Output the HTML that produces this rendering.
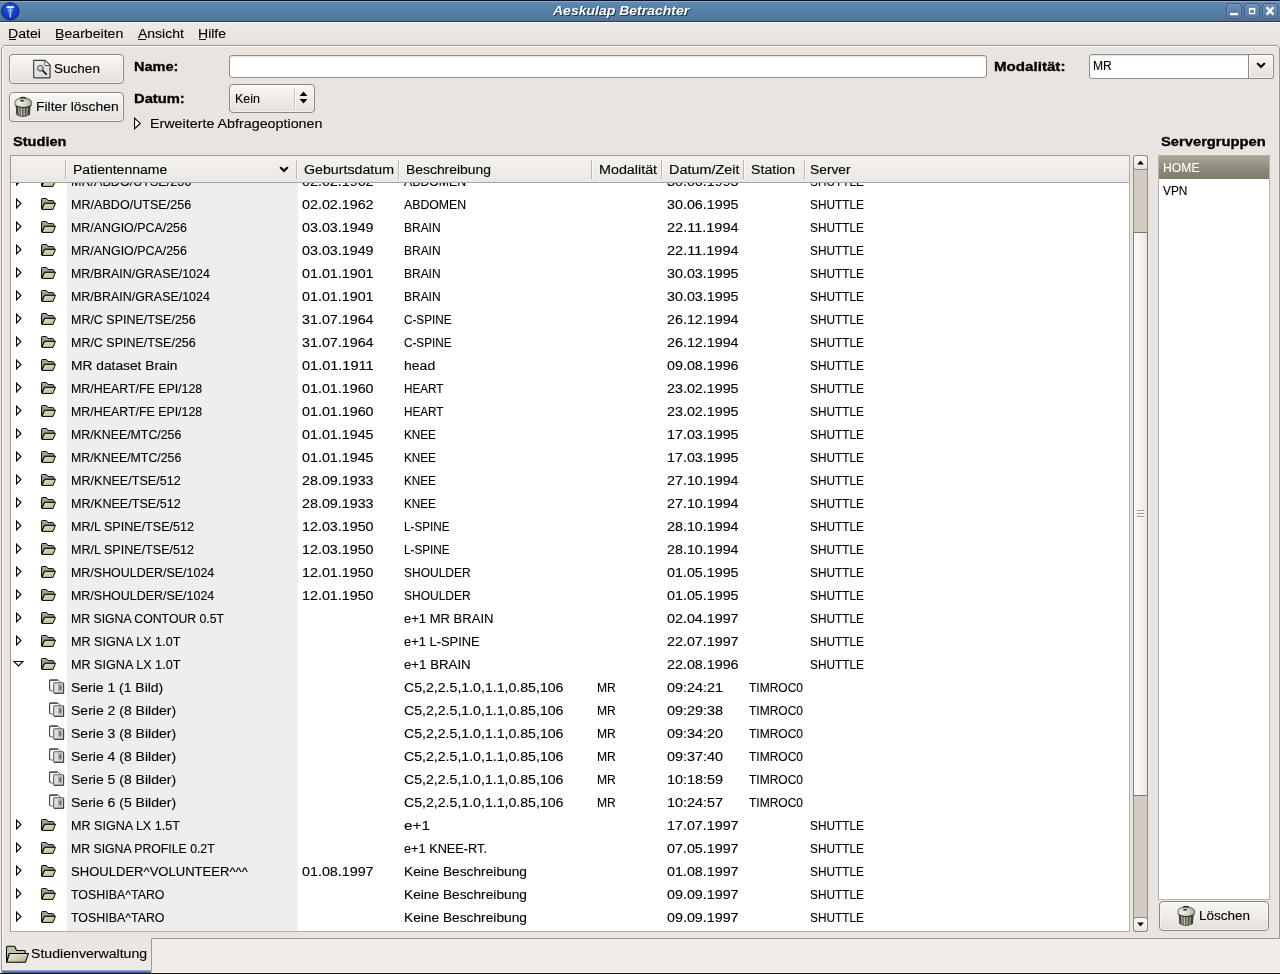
<!DOCTYPE html>
<html>
<head>
<meta charset="utf-8">
<title>Aeskulap Betrachter</title>
<style>
html,body{margin:0;padding:0;background:#efece8;}
body{width:1280px;height:974px;overflow:hidden;font-family:"Liberation Sans",sans-serif;font-size:12.5px;color:#000;}
#win{position:relative;width:1280px;height:974px;overflow:hidden;background:#efece8;}
#win *{position:absolute;box-sizing:border-box;}
.t{-webkit-text-stroke:.12px currentColor;transform-origin:0 0;white-space:pre;line-height:20px;font-size:12.5px;font-family:"Liberation Sans",sans-serif;color:#000;}
.t u{position:static !important;text-decoration:underline;text-underline-offset:1.5px;text-decoration-thickness:1px;}
#txt,#rows{will-change:transform;}
#txt{left:0;top:0;width:1280px;height:974px;}
.b{font-weight:bold;-webkit-text-stroke:.3px #000;}
.bi{font-weight:bold;font-style:italic;-webkit-text-stroke:0;}
.title{text-shadow:1px 1px 0 #1d3350;}
#titlebar{left:0;top:0;width:1280px;height:22px;background:linear-gradient(#061226 0,#061226 1px,#88a7c9 1px,#88a7c9 2px,#668bb0 2px,#5a85ae 5px,#567ea6 10px,#527ca5 17px,#56779a 19px,#5a7089 20px,#5a7089 20.5px,#2d3f54 21px,#2d3f54 22px);}
.wb{top:3px;width:16px;height:16px;border:1px solid #3e5f86;border-radius:4px;background:linear-gradient(#6b8fb6,#52779d);box-shadow:inset 0 0 0 1px rgba(255,255,255,.10);}
#menubar{left:0;top:22px;width:1280px;height:23px;background:linear-gradient(#f8f7f5 0,#f8f7f5 1px,#edeae5 1px,#e7e3de 22px,#dcd8d2 22px,#dcd8d2 23px);}
#page{left:1px;top:45px;width:1279px;height:894px;background:#e9e4df;border:1px solid #9d9890;border-radius:4px 4px 0 0;box-shadow:inset 1px 1px 0 #fbfaf9;}
#tab{left:1px;top:938px;width:151px;height:34px;background:linear-gradient(#e9e4df,#eeebe7);border:1px solid #9d9890;border-top:none;border-bottom:none;border-radius:0 0 4px 4px;box-shadow:inset 1px 0 0 #f4f2ef;}
#tabblue{left:1px;top:970px;width:151px;height:3px;background:linear-gradient(#86a9cf 0,#86a9cf 1px,#5c87b3 1px,#5c87b3 2px,#3f6389 2px);border-radius:0 0 4px 4px;}
#botline{left:0;top:973px;width:1280px;height:1px;background:#111;}
#botwhite{left:153px;top:972px;width:1127px;height:1px;background:#fbfaf9;}
.btn{border:1px solid #8d8880;border-radius:4px;background:linear-gradient(#f8f7f5,#efece9 45%,#e4e0db);box-shadow:inset 0 0 0 1px rgba(255,255,255,.55);}
.entry{border:1px solid #938e87;border-radius:3px;background:#fff;box-shadow:inset 0 1px 1px rgba(0,0,0,.12);}
#tree{left:10px;top:155px;width:1120px;height:777px;background:#fff;border:1px solid;border-color:#a39e97 #b4afa8 #b4afa8 #9c978f;}
#sortcol{left:67px;top:183px;width:231px;height:748px;background:#eeeeee;}
#rows{left:0;top:0;width:1280px;height:974px;clip-path:inset(183px 151px 43px 11px);}
#thead{left:11px;top:156px;width:1118px;height:27px;background:linear-gradient(#f4f2f0,#efece9 50%,#ebe7e3);border-bottom:1px solid #a9a49d;}
.sep{top:160px;width:2px;height:19px;background:linear-gradient(90deg,#bcb7b0 0,#bcb7b0 1px,#fbfaf9 1px);}
.ic{overflow:visible;}
#sb{left:1133px;top:155px;width:15px;height:777px;background:#d3cac1;border:1px solid #968f87;border-radius:3px;}
.step{left:1133px;width:15px;height:15px;border:1px solid #8d8880;border-radius:3px;background:linear-gradient(#fbfaf9,#e9e5e1);}
#thumb{left:1133px;top:232px;width:15px;height:564px;border:1px solid #7f7a74;background:linear-gradient(90deg,#fdfcfc,#f4f2f0 50%,#e9e5e1);}
#slist{left:1158px;top:155px;width:112px;height:745px;background:#fff;border:1px solid #b6b1a9;}
#selrow{left:1159px;top:156px;width:110px;height:23px;background:linear-gradient(#aba594,#8f8b7b 55%,#7d796b);}
</style>
</head>
<body>
<svg width="0" height="0" style="position:absolute">
<defs>
<linearGradient id="gFold" x1="0" y1="0" x2="1" y2="1"><stop offset="0" stop-color="#dfe2c2"/><stop offset="1" stop-color="#b9bc98"/></linearGradient>
<linearGradient id="gFold2" x1="0" y1="0" x2="1" y2="1"><stop offset="0" stop-color="#e4e6cd"/><stop offset=".5" stop-color="#cfd2b1"/><stop offset="1" stop-color="#a6a889"/></linearGradient>
<linearGradient id="gPage" x1="0" y1="0" x2="1" y2="1"><stop offset="0" stop-color="#eeeeee"/><stop offset="1" stop-color="#d6d6d6"/></linearGradient>
<linearGradient id="gBin" x1="0" y1="0" x2="1" y2="0"><stop offset="0" stop-color="#3b3a31"/><stop offset=".3" stop-color="#8d8c7d"/><stop offset=".55" stop-color="#75746a"/><stop offset="1" stop-color="#36352d"/></linearGradient>
<radialGradient id="gLid" cx=".3" cy=".55" r=".75"><stop offset="0" stop-color="#f0f0e5"/><stop offset=".55" stop-color="#d2d2c3"/><stop offset="1" stop-color="#9a9a8b"/></radialGradient>
<radialGradient id="gApp" cx=".45" cy=".35" r=".7"><stop offset="0" stop-color="#2a5ae0"/><stop offset=".7" stop-color="#1038c0"/><stop offset="1" stop-color="#0a2690"/></radialGradient>
<symbol id="exc" viewBox="0 0 7 13" overflow="visible"><path d="M0.55 1.1 L4.95 5.5 L0.55 9.9 Z" fill="#fff" stroke="#000" stroke-width="1.1" stroke-linejoin="miter"/></symbol>
<symbol id="exo" viewBox="0 0 12 7" overflow="visible"><path d="M1.08 1.55 L9.92 1.55 L5.5 5.97 Z" fill="#fff" stroke="#000" stroke-width="1.1" stroke-linejoin="miter"/></symbol>
<symbol id="fold" viewBox="0 0 16 14" overflow="visible">
 <path d="M0.6 12 V2.3 Q0.6 1.5 1.4 1.5 H5.3 L7.2 3.6 H11.8 Q12.6 3.6 12.8 4.4 L13.3 6.3 H3.4 Z" fill="#a3a58f" stroke="#000" stroke-width="1" stroke-linejoin="round"/>
 <path d="M3.7 6.3 H14.5 L12 12.4 H0.9 Z" fill="url(#gFold)" stroke="#000" stroke-width="1" stroke-linejoin="round"/>
</symbol>
<symbol id="ser" viewBox="0 0 16 16" overflow="visible">
 <path d="M0.6 1.2 Q0.6 0.6 1.2 0.6 H8.8 L11.4 3.2 V12 H1.6 L0.6 11 Z" fill="#fcfcfc" stroke="#6a6a6a" stroke-width="1"/>
 <path d="M1 1.5 H8.6" fill="none" stroke="#555" stroke-width="1"/>
 <path d="M0.6 1.2 V11 L1.6 12" fill="none" stroke="#444" stroke-width="1"/>
 <rect x="4.6" y="3.7" width="10" height="10.6" rx="0.6" fill="#cecece" stroke="#666" stroke-width="1"/>
 <path d="M14.6 4 V14.3 H4.9" fill="none" stroke="#3a3a3a" stroke-width="1"/>
 <rect x="5.8" y="4.9" width="3.4" height="8.2" fill="#dddddd"/>
 <rect x="9.2" y="5.2" width="3.8" height="6.6" fill="#a6a6a6"/>
 <rect x="10.3" y="7" width="1.8" height="3.6" fill="#6c6c6c"/>
</symbol>
<symbol id="bin" viewBox="0 0 18 20" overflow="visible">
 <path d="M2.2 8 L2.8 17.6 Q9 21.2 15.5 17.6 L16.1 8 Z" fill="url(#gBin)" stroke="#2f2e27" stroke-width=".9"/>
 <path d="M4.6 10 L5.2 18.4 M7.3 10.6 L7.6 19.2 M10.2 10.6 L10.1 19.2 M13.4 10 L12.8 18.4" stroke="#c9c9b9" stroke-width="1.1" fill="none" opacity=".8"/>
 <path d="M3.4 10 L4 17.8 M6 10.4 L6.4 18.9 M8.8 10.8 L8.9 19.3 M11.8 10.4 L11.5 18.9 M14.8 10 L14.2 17.8" stroke="#3a392f" stroke-width=".7" fill="none" opacity=".7"/>
 <path d="M0.9 5.6 Q0.9 2.4 5.4 1.5 Q9 .6 12.7 1.5 Q17.7 2.4 17.7 5.6 L17.3 8.4 Q9 12.6 1.3 8.4 Z" fill="url(#gLid)" stroke="#4f4e44" stroke-width=".8"/>
 <path d="M1.4 8.6 Q9 12.9 17.2 8.6" stroke="#2f2e27" stroke-width="1" fill="none" opacity=".8"/>
 <path d="M5.8 1.3 Q9 -.5 12.2 1.3" stroke="#2a2a24" stroke-width="1.1" fill="none"/>
 <ellipse cx="8.1" cy="3.7" rx="2" ry="1" fill="#3f3e34"/>
</symbol>
<symbol id="find" viewBox="0 0 18 19" overflow="visible">
 <path d="M0.7 0.9 Q0.7 0.3 1.3 0.3 H11.8 L17.1 5 V17.2 Q17.1 17.8 16.5 17.8 H1.3 Q0.7 17.8 0.7 17.2 Z" fill="url(#gPage)" stroke="#3c3c3c" stroke-width="1.15"/>
 <path d="M12 0.8 V5.4 H16.8" fill="none" stroke="#3c3c3c" stroke-width="1"/>
 <path d="M12.4 1.6 V5 H16" fill="#f6f6f6" stroke="none"/>
 <circle cx="7.4" cy="8.3" r="2.9" fill="#c6c6be" stroke="#4a4a4a" stroke-width="1"/>
 <circle cx="6.9" cy="7.7" r="1.3" fill="#dcdcd6"/>
 <path d="M9.6 10.5 L13.2 14.1" stroke="#111" stroke-width="1.6" stroke-linecap="round"/>
</symbol>
<symbol id="tabfold" viewBox="0 0 24 18" overflow="visible">
 <path d="M0.5 16.6 V2.8 Q0.5 1.3 1.9 1.3 H7.9 Q8.8 1.3 9.2 2.2 L10.6 5.5 H18.3 Q19.2 5.5 19.2 6.4 V8.4 H3.4 Z" fill="#bfc1aa" stroke="#000" stroke-width="1.05" stroke-linejoin="round"/>
 <path d="M3.4 8.4 H22.5 L19.4 17.3 H0.7 Z" fill="url(#gFold2)" stroke="#000" stroke-width="1.05" stroke-linejoin="round"/>
</symbol>
</defs>
</svg>
<div id="win">
<div id="titlebar"></div>
<svg class="ic" style="left:1px;top:2px" width="19" height="19" viewBox="0 0 19 19"><circle cx="9.3" cy="9.3" r="8.8" fill="url(#gApp)" stroke="#0b2a8c" stroke-width=".8"/><path d="M6.2 6.6 Q7.6 7.4 9.3 7.2 Q11 7.4 12.4 6.6 L10.4 11.6 Q9.9 14.4 9.6 15.8 H9 Q8.7 14.4 8.2 11.6 Z" fill="#a9bdf0" opacity=".75"/><path d="M4.9 5.2 Q7.2 3.4 9.3 4.5 Q11.4 3.4 13.7 5.2 Q11.6 6.5 9.3 6.2 Q7 6.5 4.9 5.2 Z" fill="#fff"/><path d="M9.3 6 V15.4" stroke="#dfe7fb" stroke-width=".9"/><path d="M7.6 8.4 Q9.3 9.4 11 8.4 M8 10.6 Q9.3 11.5 10.6 10.6" stroke="#2448c4" stroke-width=".7" fill="none" opacity=".8"/></svg>
<div class="wb" style="left:1226px"></div><div class="wb" style="left:1244px"></div><div class="wb" style="left:1262px"></div>
<svg class="ic" style="left:1226px;top:3px" width="52" height="16" viewBox="0 0 52 16">
 <rect x="4" y="10" width="8" height="2.2" fill="#fff"/>
 <rect x="23.6" y="5.6" width="5" height="5" fill="none" stroke="#fff" stroke-width="1.3"/><rect x="23" y="5" width="6.2" height="1.9" fill="#fff"/>
 <path d="M40.6 4.2 L47.4 11.6 M47.4 4.2 L40.6 11.6" stroke="#fff" stroke-width="2.3" stroke-linecap="butt"/>
</svg>
<div id="menubar"></div>
<div id="page"></div>
<div id="tab"></div><div id="tabblue"></div><div id="botline"></div><div id="botwhite"></div>
<div class="btn" style="left:9px;top:54px;width:115px;height:30px"></div>
<svg class="ic" style="left:33px;top:60px" width="18" height="19"><use href="#find"/></svg>
<div class="btn" style="left:9px;top:92px;width:115px;height:30px"></div>
<svg class="ic" style="left:14px;top:97px" width="18" height="20"><use href="#bin"/></svg>
<div class="entry" style="left:229px;top:55px;width:758px;height:23px"></div>
<div class="btn" style="left:229px;top:84px;width:86px;height:29px"></div>
<div style="left:294px;top:89px;width:2px;height:19px;background:linear-gradient(90deg,#c9c4bd 0,#c9c4bd 1px,#fbfaf9 1px)"></div>
<svg class="ic" style="left:299px;top:91px" width="9" height="13" viewBox="0 0 9 13"><path d="M4.5 0.6 L8.4 5 H0.6 Z M4.5 12.4 L8.4 8 H0.6 Z" fill="#000"/></svg>
<svg class="ic" style="left:134px;top:117px" width="8" height="14" viewBox="0 0 8 14"><path d="M0.55 1.2 L6.3 6.45 L0.55 11.7 Z" fill="#fff" stroke="#000" stroke-width="1.1"/></svg>
<div class="entry" style="left:1089px;top:54px;width:185px;height:25px;border-radius:3px"></div>
<div class="btn" style="left:1248px;top:54px;width:26px;height:25px;border-radius:0 3px 3px 0"></div>
<svg class="ic" style="left:1256px;top:62px" width="10" height="8" viewBox="0 0 10 8"><path d="M0.4 1.8 L1.9 0.4 L5 3.2 L8.1 0.4 L9.6 1.8 L5 6.4 Z" fill="#000"/></svg>
<div id="tree"></div>
<div id="sortcol"></div>

<div id="rows">
<svg class="ic" style="left:16px;top:175px" width="7" height="13"><use href="#exc"/></svg>
<svg class="ic" style="left:41px;top:174px" width="16" height="14"><use href="#fold"/></svg>
<svg class="ic" style="left:16px;top:198px" width="7" height="13"><use href="#exc"/></svg>
<svg class="ic" style="left:41px;top:197px" width="16" height="14"><use href="#fold"/></svg>
<svg class="ic" style="left:16px;top:221px" width="7" height="13"><use href="#exc"/></svg>
<svg class="ic" style="left:41px;top:220px" width="16" height="14"><use href="#fold"/></svg>
<svg class="ic" style="left:16px;top:244px" width="7" height="13"><use href="#exc"/></svg>
<svg class="ic" style="left:41px;top:243px" width="16" height="14"><use href="#fold"/></svg>
<svg class="ic" style="left:16px;top:267px" width="7" height="13"><use href="#exc"/></svg>
<svg class="ic" style="left:41px;top:266px" width="16" height="14"><use href="#fold"/></svg>
<svg class="ic" style="left:16px;top:290px" width="7" height="13"><use href="#exc"/></svg>
<svg class="ic" style="left:41px;top:289px" width="16" height="14"><use href="#fold"/></svg>
<svg class="ic" style="left:16px;top:313px" width="7" height="13"><use href="#exc"/></svg>
<svg class="ic" style="left:41px;top:312px" width="16" height="14"><use href="#fold"/></svg>
<svg class="ic" style="left:16px;top:336px" width="7" height="13"><use href="#exc"/></svg>
<svg class="ic" style="left:41px;top:335px" width="16" height="14"><use href="#fold"/></svg>
<svg class="ic" style="left:16px;top:359px" width="7" height="13"><use href="#exc"/></svg>
<svg class="ic" style="left:41px;top:358px" width="16" height="14"><use href="#fold"/></svg>
<svg class="ic" style="left:16px;top:382px" width="7" height="13"><use href="#exc"/></svg>
<svg class="ic" style="left:41px;top:381px" width="16" height="14"><use href="#fold"/></svg>
<svg class="ic" style="left:16px;top:405px" width="7" height="13"><use href="#exc"/></svg>
<svg class="ic" style="left:41px;top:404px" width="16" height="14"><use href="#fold"/></svg>
<svg class="ic" style="left:16px;top:428px" width="7" height="13"><use href="#exc"/></svg>
<svg class="ic" style="left:41px;top:427px" width="16" height="14"><use href="#fold"/></svg>
<svg class="ic" style="left:16px;top:451px" width="7" height="13"><use href="#exc"/></svg>
<svg class="ic" style="left:41px;top:450px" width="16" height="14"><use href="#fold"/></svg>
<svg class="ic" style="left:16px;top:474px" width="7" height="13"><use href="#exc"/></svg>
<svg class="ic" style="left:41px;top:473px" width="16" height="14"><use href="#fold"/></svg>
<svg class="ic" style="left:16px;top:497px" width="7" height="13"><use href="#exc"/></svg>
<svg class="ic" style="left:41px;top:496px" width="16" height="14"><use href="#fold"/></svg>
<svg class="ic" style="left:16px;top:520px" width="7" height="13"><use href="#exc"/></svg>
<svg class="ic" style="left:41px;top:519px" width="16" height="14"><use href="#fold"/></svg>
<svg class="ic" style="left:16px;top:543px" width="7" height="13"><use href="#exc"/></svg>
<svg class="ic" style="left:41px;top:542px" width="16" height="14"><use href="#fold"/></svg>
<svg class="ic" style="left:16px;top:566px" width="7" height="13"><use href="#exc"/></svg>
<svg class="ic" style="left:41px;top:565px" width="16" height="14"><use href="#fold"/></svg>
<svg class="ic" style="left:16px;top:589px" width="7" height="13"><use href="#exc"/></svg>
<svg class="ic" style="left:41px;top:588px" width="16" height="14"><use href="#fold"/></svg>
<svg class="ic" style="left:16px;top:612px" width="7" height="13"><use href="#exc"/></svg>
<svg class="ic" style="left:41px;top:611px" width="16" height="14"><use href="#fold"/></svg>
<svg class="ic" style="left:16px;top:635px" width="7" height="13"><use href="#exc"/></svg>
<svg class="ic" style="left:41px;top:634px" width="16" height="14"><use href="#fold"/></svg>
<svg class="ic" style="left:13px;top:660px" width="12" height="7"><use href="#exo"/></svg>
<svg class="ic" style="left:41px;top:657px" width="16" height="14"><use href="#fold"/></svg>
<svg class="ic" style="left:49px;top:679px" width="16" height="16"><use href="#ser"/></svg>
<svg class="ic" style="left:49px;top:702px" width="16" height="16"><use href="#ser"/></svg>
<svg class="ic" style="left:49px;top:725px" width="16" height="16"><use href="#ser"/></svg>
<svg class="ic" style="left:49px;top:748px" width="16" height="16"><use href="#ser"/></svg>
<svg class="ic" style="left:49px;top:771px" width="16" height="16"><use href="#ser"/></svg>
<svg class="ic" style="left:49px;top:794px" width="16" height="16"><use href="#ser"/></svg>
<svg class="ic" style="left:16px;top:819px" width="7" height="13"><use href="#exc"/></svg>
<svg class="ic" style="left:41px;top:818px" width="16" height="14"><use href="#fold"/></svg>
<svg class="ic" style="left:16px;top:842px" width="7" height="13"><use href="#exc"/></svg>
<svg class="ic" style="left:41px;top:841px" width="16" height="14"><use href="#fold"/></svg>
<svg class="ic" style="left:16px;top:865px" width="7" height="13"><use href="#exc"/></svg>
<svg class="ic" style="left:41px;top:864px" width="16" height="14"><use href="#fold"/></svg>
<svg class="ic" style="left:16px;top:888px" width="7" height="13"><use href="#exc"/></svg>
<svg class="ic" style="left:41px;top:887px" width="16" height="14"><use href="#fold"/></svg>
<svg class="ic" style="left:16px;top:911px" width="7" height="13"><use href="#exc"/></svg>
<svg class="ic" style="left:41px;top:910px" width="16" height="14"><use href="#fold"/></svg>
<span class="t row" style="left:70.5px;top:171.67px;transform:scaleX(1.0058);">MR/ABDO/UTSE/256</span>
<span class="t row" style="left:301.5px;top:171.67px;transform:scaleX(1.1441);">02.02.1962</span>
<span class="t row" style="left:403.5px;top:171.67px;transform:scaleX(0.9837);">ABDOMEN</span>
<span class="t row" style="left:666.5px;top:171.67px;transform:scaleX(1.1441);">30.06.1995</span>
<span class="t row" style="left:809.5px;top:171.67px;transform:scaleX(0.9474);">SHUTTLE</span>
<span class="t row" style="left:70.5px;top:194.67px;transform:scaleX(1.0058);">MR/ABDO/UTSE/256</span>
<span class="t row" style="left:301.5px;top:194.67px;transform:scaleX(1.1441);">02.02.1962</span>
<span class="t row" style="left:403.5px;top:194.67px;transform:scaleX(0.9837);">ABDOMEN</span>
<span class="t row" style="left:666.5px;top:194.67px;transform:scaleX(1.1441);">30.06.1995</span>
<span class="t row" style="left:809.5px;top:194.67px;transform:scaleX(0.9474);">SHUTTLE</span>
<span class="t row" style="left:70.5px;top:217.67px;transform:scaleX(0.9932);">MR/ANGIO/PCA/256</span>
<span class="t row" style="left:301.5px;top:217.67px;transform:scaleX(1.1441);">03.03.1949</span>
<span class="t row" style="left:403.5px;top:217.67px;transform:scaleX(0.9579);">BRAIN</span>
<span class="t row" style="left:666.5px;top:217.67px;transform:scaleX(1.1612);">22.11.1994</span>
<span class="t row" style="left:809.5px;top:217.67px;transform:scaleX(0.9474);">SHUTTLE</span>
<span class="t row" style="left:70.5px;top:240.67px;transform:scaleX(0.9932);">MR/ANGIO/PCA/256</span>
<span class="t row" style="left:301.5px;top:240.67px;transform:scaleX(1.1441);">03.03.1949</span>
<span class="t row" style="left:403.5px;top:240.67px;transform:scaleX(0.9579);">BRAIN</span>
<span class="t row" style="left:666.5px;top:240.67px;transform:scaleX(1.1612);">22.11.1994</span>
<span class="t row" style="left:809.5px;top:240.67px;transform:scaleX(0.9474);">SHUTTLE</span>
<span class="t row" style="left:70.5px;top:263.67px;transform:scaleX(0.9941);">MR/BRAIN/GRASE/1024</span>
<span class="t row" style="left:301.5px;top:263.67px;transform:scaleX(1.1441);">01.01.1901</span>
<span class="t row" style="left:403.5px;top:263.67px;transform:scaleX(0.9579);">BRAIN</span>
<span class="t row" style="left:666.5px;top:263.67px;transform:scaleX(1.1441);">30.03.1995</span>
<span class="t row" style="left:809.5px;top:263.67px;transform:scaleX(0.9474);">SHUTTLE</span>
<span class="t row" style="left:70.5px;top:286.67px;transform:scaleX(0.9941);">MR/BRAIN/GRASE/1024</span>
<span class="t row" style="left:301.5px;top:286.67px;transform:scaleX(1.1441);">01.01.1901</span>
<span class="t row" style="left:403.5px;top:286.67px;transform:scaleX(0.9579);">BRAIN</span>
<span class="t row" style="left:666.5px;top:286.67px;transform:scaleX(1.1441);">30.03.1995</span>
<span class="t row" style="left:809.5px;top:286.67px;transform:scaleX(0.9474);">SHUTTLE</span>
<span class="t row" style="left:70.5px;top:309.67px;transform:scaleX(0.9972);">MR/C SPINE/TSE/256</span>
<span class="t row" style="left:301.5px;top:309.67px;transform:scaleX(1.1441);">31.07.1964</span>
<span class="t row" style="left:403.5px;top:309.67px;transform:scaleX(0.9379);">C-SPINE</span>
<span class="t row" style="left:666.5px;top:309.67px;transform:scaleX(1.1441);">26.12.1994</span>
<span class="t row" style="left:809.5px;top:309.67px;transform:scaleX(0.9474);">SHUTTLE</span>
<span class="t row" style="left:70.5px;top:332.67px;transform:scaleX(0.9972);">MR/C SPINE/TSE/256</span>
<span class="t row" style="left:301.5px;top:332.67px;transform:scaleX(1.1441);">31.07.1964</span>
<span class="t row" style="left:403.5px;top:332.67px;transform:scaleX(0.9379);">C-SPINE</span>
<span class="t row" style="left:666.5px;top:332.67px;transform:scaleX(1.1441);">26.12.1994</span>
<span class="t row" style="left:809.5px;top:332.67px;transform:scaleX(0.9474);">SHUTTLE</span>
<span class="t row" style="left:70.5px;top:355.67px;transform:scaleX(1.1017);">MR dataset Brain</span>
<span class="t row" style="left:301.5px;top:355.67px;transform:scaleX(1.1612);">01.01.1911</span>
<span class="t row" style="left:403.5px;top:355.67px;transform:scaleX(1.1225);">head</span>
<span class="t row" style="left:666.5px;top:355.67px;transform:scaleX(1.1441);">09.08.1996</span>
<span class="t row" style="left:809.5px;top:355.67px;transform:scaleX(0.9474);">SHUTTLE</span>
<span class="t row" style="left:70.5px;top:378.67px;transform:scaleX(0.9907);">MR/HEART/FE EPI/128</span>
<span class="t row" style="left:301.5px;top:378.67px;transform:scaleX(1.1441);">01.01.1960</span>
<span class="t row" style="left:403.5px;top:378.67px;transform:scaleX(0.9377);">HEART</span>
<span class="t row" style="left:666.5px;top:378.67px;transform:scaleX(1.1441);">23.02.1995</span>
<span class="t row" style="left:809.5px;top:378.67px;transform:scaleX(0.9474);">SHUTTLE</span>
<span class="t row" style="left:70.5px;top:401.67px;transform:scaleX(0.9907);">MR/HEART/FE EPI/128</span>
<span class="t row" style="left:301.5px;top:401.67px;transform:scaleX(1.1441);">01.01.1960</span>
<span class="t row" style="left:403.5px;top:401.67px;transform:scaleX(0.9377);">HEART</span>
<span class="t row" style="left:666.5px;top:401.67px;transform:scaleX(1.1441);">23.02.1995</span>
<span class="t row" style="left:809.5px;top:401.67px;transform:scaleX(0.9474);">SHUTTLE</span>
<span class="t row" style="left:70.5px;top:424.67px;transform:scaleX(0.9861);">MR/KNEE/MTC/256</span>
<span class="t row" style="left:301.5px;top:424.67px;transform:scaleX(1.1441);">01.01.1945</span>
<span class="t row" style="left:403.5px;top:424.67px;transform:scaleX(0.9382);">KNEE</span>
<span class="t row" style="left:666.5px;top:424.67px;transform:scaleX(1.1441);">17.03.1995</span>
<span class="t row" style="left:809.5px;top:424.67px;transform:scaleX(0.9474);">SHUTTLE</span>
<span class="t row" style="left:70.5px;top:447.67px;transform:scaleX(0.9861);">MR/KNEE/MTC/256</span>
<span class="t row" style="left:301.5px;top:447.67px;transform:scaleX(1.1441);">01.01.1945</span>
<span class="t row" style="left:403.5px;top:447.67px;transform:scaleX(0.9382);">KNEE</span>
<span class="t row" style="left:666.5px;top:447.67px;transform:scaleX(1.1441);">17.03.1995</span>
<span class="t row" style="left:809.5px;top:447.67px;transform:scaleX(0.9474);">SHUTTLE</span>
<span class="t row" style="left:70.5px;top:470.67px;transform:scaleX(1.0051);">MR/KNEE/TSE/512</span>
<span class="t row" style="left:301.5px;top:470.67px;transform:scaleX(1.1441);">28.09.1933</span>
<span class="t row" style="left:403.5px;top:470.67px;transform:scaleX(0.9382);">KNEE</span>
<span class="t row" style="left:666.5px;top:470.67px;transform:scaleX(1.1441);">27.10.1994</span>
<span class="t row" style="left:809.5px;top:470.67px;transform:scaleX(0.9474);">SHUTTLE</span>
<span class="t row" style="left:70.5px;top:493.67px;transform:scaleX(1.0051);">MR/KNEE/TSE/512</span>
<span class="t row" style="left:301.5px;top:493.67px;transform:scaleX(1.1441);">28.09.1933</span>
<span class="t row" style="left:403.5px;top:493.67px;transform:scaleX(0.9382);">KNEE</span>
<span class="t row" style="left:666.5px;top:493.67px;transform:scaleX(1.1441);">27.10.1994</span>
<span class="t row" style="left:809.5px;top:493.67px;transform:scaleX(0.9474);">SHUTTLE</span>
<span class="t row" style="left:70.5px;top:516.67px;transform:scaleX(1.0035);">MR/L SPINE/TSE/512</span>
<span class="t row" style="left:301.5px;top:516.67px;transform:scaleX(1.1441);">12.03.1950</span>
<span class="t row" style="left:403.5px;top:516.67px;transform:scaleX(0.9369);">L-SPINE</span>
<span class="t row" style="left:666.5px;top:516.67px;transform:scaleX(1.1441);">28.10.1994</span>
<span class="t row" style="left:809.5px;top:516.67px;transform:scaleX(0.9474);">SHUTTLE</span>
<span class="t row" style="left:70.5px;top:539.67px;transform:scaleX(1.0035);">MR/L SPINE/TSE/512</span>
<span class="t row" style="left:301.5px;top:539.67px;transform:scaleX(1.1441);">12.03.1950</span>
<span class="t row" style="left:403.5px;top:539.67px;transform:scaleX(0.9369);">L-SPINE</span>
<span class="t row" style="left:666.5px;top:539.67px;transform:scaleX(1.1441);">28.10.1994</span>
<span class="t row" style="left:809.5px;top:539.67px;transform:scaleX(0.9474);">SHUTTLE</span>
<span class="t row" style="left:70.5px;top:562.67px;transform:scaleX(0.9961);">MR/SHOULDER/SE/1024</span>
<span class="t row" style="left:301.5px;top:562.67px;transform:scaleX(1.1441);">12.01.1950</span>
<span class="t row" style="left:403.5px;top:562.67px;transform:scaleX(0.9601);">SHOULDER</span>
<span class="t row" style="left:666.5px;top:562.67px;transform:scaleX(1.1441);">01.05.1995</span>
<span class="t row" style="left:809.5px;top:562.67px;transform:scaleX(0.9474);">SHUTTLE</span>
<span class="t row" style="left:70.5px;top:585.67px;transform:scaleX(0.9961);">MR/SHOULDER/SE/1024</span>
<span class="t row" style="left:301.5px;top:585.67px;transform:scaleX(1.1441);">12.01.1950</span>
<span class="t row" style="left:403.5px;top:585.67px;transform:scaleX(0.9601);">SHOULDER</span>
<span class="t row" style="left:666.5px;top:585.67px;transform:scaleX(1.1441);">01.05.1995</span>
<span class="t row" style="left:809.5px;top:585.67px;transform:scaleX(0.9474);">SHUTTLE</span>
<span class="t row" style="left:70.5px;top:608.67px;transform:scaleX(0.9811);">MR SIGNA CONTOUR 0.5T</span>
<span class="t row" style="left:403.5px;top:608.67px;transform:scaleX(1.0425);">e+1 MR BRAIN</span>
<span class="t row" style="left:666.5px;top:608.67px;transform:scaleX(1.1441);">02.04.1997</span>
<span class="t row" style="left:809.5px;top:608.67px;transform:scaleX(0.9474);">SHUTTLE</span>
<span class="t row" style="left:70.5px;top:631.67px;transform:scaleX(1.0091);">MR SIGNA LX 1.0T</span>
<span class="t row" style="left:403.5px;top:631.67px;transform:scaleX(1.0321);">e+1 L-SPINE</span>
<span class="t row" style="left:666.5px;top:631.67px;transform:scaleX(1.1441);">22.07.1997</span>
<span class="t row" style="left:809.5px;top:631.67px;transform:scaleX(0.9474);">SHUTTLE</span>
<span class="t row" style="left:70.5px;top:654.67px;transform:scaleX(1.0091);">MR SIGNA LX 1.0T</span>
<span class="t row" style="left:403.5px;top:654.67px;transform:scaleX(1.0604);">e+1 BRAIN</span>
<span class="t row" style="left:666.5px;top:654.67px;transform:scaleX(1.1441);">22.08.1996</span>
<span class="t row" style="left:809.5px;top:654.67px;transform:scaleX(0.9474);">SHUTTLE</span>
<span class="t row" style="left:70.5px;top:677.67px;transform:scaleX(1.1159);">Serie 1 (1 Bild)</span>
<span class="t row" style="left:403.5px;top:677.67px;transform:scaleX(1.1302);">C5,2,2.5,1.0,1.1,0.85,106</span>
<span class="t row" style="left:596.5px;top:677.67px;transform:scaleX(0.9656);">MR</span>
<span class="t row" style="left:666.5px;top:677.67px;transform:scaleX(1.1535);">09:24:21</span>
<span class="t row" style="left:748.5px;top:677.67px;transform:scaleX(0.9602);">TIMROC0</span>
<span class="t row" style="left:70.5px;top:700.67px;transform:scaleX(1.1205);">Serie 2 (8 Bilder)</span>
<span class="t row" style="left:403.5px;top:700.67px;transform:scaleX(1.1302);">C5,2,2.5,1.0,1.1,0.85,106</span>
<span class="t row" style="left:596.5px;top:700.67px;transform:scaleX(0.9656);">MR</span>
<span class="t row" style="left:666.5px;top:700.67px;transform:scaleX(1.1535);">09:29:38</span>
<span class="t row" style="left:748.5px;top:700.67px;transform:scaleX(0.9602);">TIMROC0</span>
<span class="t row" style="left:70.5px;top:723.67px;transform:scaleX(1.1205);">Serie 3 (8 Bilder)</span>
<span class="t row" style="left:403.5px;top:723.67px;transform:scaleX(1.1302);">C5,2,2.5,1.0,1.1,0.85,106</span>
<span class="t row" style="left:596.5px;top:723.67px;transform:scaleX(0.9656);">MR</span>
<span class="t row" style="left:666.5px;top:723.67px;transform:scaleX(1.1535);">09:34:20</span>
<span class="t row" style="left:748.5px;top:723.67px;transform:scaleX(0.9602);">TIMROC0</span>
<span class="t row" style="left:70.5px;top:746.67px;transform:scaleX(1.1205);">Serie 4 (8 Bilder)</span>
<span class="t row" style="left:403.5px;top:746.67px;transform:scaleX(1.1302);">C5,2,2.5,1.0,1.1,0.85,106</span>
<span class="t row" style="left:596.5px;top:746.67px;transform:scaleX(0.9656);">MR</span>
<span class="t row" style="left:666.5px;top:746.67px;transform:scaleX(1.1535);">09:37:40</span>
<span class="t row" style="left:748.5px;top:746.67px;transform:scaleX(0.9602);">TIMROC0</span>
<span class="t row" style="left:70.5px;top:769.67px;transform:scaleX(1.1205);">Serie 5 (8 Bilder)</span>
<span class="t row" style="left:403.5px;top:769.67px;transform:scaleX(1.1302);">C5,2,2.5,1.0,1.1,0.85,106</span>
<span class="t row" style="left:596.5px;top:769.67px;transform:scaleX(0.9656);">MR</span>
<span class="t row" style="left:666.5px;top:769.67px;transform:scaleX(1.1535);">10:18:59</span>
<span class="t row" style="left:748.5px;top:769.67px;transform:scaleX(0.9602);">TIMROC0</span>
<span class="t row" style="left:70.5px;top:792.67px;transform:scaleX(1.1205);">Serie 6 (5 Bilder)</span>
<span class="t row" style="left:403.5px;top:792.67px;transform:scaleX(1.1302);">C5,2,2.5,1.0,1.1,0.85,106</span>
<span class="t row" style="left:596.5px;top:792.67px;transform:scaleX(0.9656);">MR</span>
<span class="t row" style="left:666.5px;top:792.67px;transform:scaleX(1.1535);">10:24:57</span>
<span class="t row" style="left:748.5px;top:792.67px;transform:scaleX(0.9602);">TIMROC0</span>
<span class="t row" style="left:70.5px;top:815.67px;transform:scaleX(1.0044);">MR SIGNA LX 1.5T</span>
<span class="t row" style="left:403.5px;top:815.67px;transform:scaleX(1.2312);">e+1</span>
<span class="t row" style="left:666.5px;top:815.67px;transform:scaleX(1.1441);">17.07.1997</span>
<span class="t row" style="left:809.5px;top:815.67px;transform:scaleX(0.9474);">SHUTTLE</span>
<span class="t row" style="left:70.5px;top:838.67px;transform:scaleX(0.9802);">MR SIGNA PROFILE 0.2T</span>
<span class="t row" style="left:403.5px;top:838.67px;transform:scaleX(1.0191);">e+1 KNEE-RT.</span>
<span class="t row" style="left:666.5px;top:838.67px;transform:scaleX(1.1441);">07.05.1997</span>
<span class="t row" style="left:809.5px;top:838.67px;transform:scaleX(0.9474);">SHUTTLE</span>
<span class="t row" style="left:70.5px;top:861.67px;transform:scaleX(1.044);">SHOULDER^VOLUNTEER^^^</span>
<span class="t row" style="left:301.5px;top:861.67px;transform:scaleX(1.1441);">01.08.1997</span>
<span class="t row" style="left:403.5px;top:861.67px;transform:scaleX(1.0988);">Keine Beschreibung</span>
<span class="t row" style="left:666.5px;top:861.67px;transform:scaleX(1.1441);">01.08.1997</span>
<span class="t row" style="left:809.5px;top:861.67px;transform:scaleX(0.9474);">SHUTTLE</span>
<span class="t row" style="left:70.5px;top:884.67px;transform:scaleX(0.9913);">TOSHIBA^TARO</span>
<span class="t row" style="left:403.5px;top:884.67px;transform:scaleX(1.0988);">Keine Beschreibung</span>
<span class="t row" style="left:666.5px;top:884.67px;transform:scaleX(1.1441);">09.09.1997</span>
<span class="t row" style="left:809.5px;top:884.67px;transform:scaleX(0.9474);">SHUTTLE</span>
<span class="t row" style="left:70.5px;top:907.67px;transform:scaleX(0.9913);">TOSHIBA^TARO</span>
<span class="t row" style="left:403.5px;top:907.67px;transform:scaleX(1.0988);">Keine Beschreibung</span>
<span class="t row" style="left:666.5px;top:907.67px;transform:scaleX(1.1441);">09.09.1997</span>
<span class="t row" style="left:809.5px;top:907.67px;transform:scaleX(0.9474);">SHUTTLE</span>
</div>
<div id="thead"></div>
<div class="sep" style="left:65px"></div><div class="sep" style="left:296px"></div><div class="sep" style="left:398px"></div><div class="sep" style="left:591px"></div><div class="sep" style="left:661px"></div><div class="sep" style="left:743px"></div><div class="sep" style="left:804px"></div>
<svg class="ic" style="left:279px;top:165.6px" width="10" height="8" viewBox="0 0 10 8"><path d="M0.4 1.8 L1.9 0.4 L5 3.2 L8.1 0.4 L9.6 1.8 L5 6.4 Z" fill="#000"/></svg>
<div id="sb"></div>
<div class="step" style="top:155px"></div><div class="step" style="top:917px"></div>
<svg class="ic" style="left:1137px;top:160px" width="7" height="5" viewBox="0 0 7 5"><path d="M3.5 0.4 L6.8 4.4 H0.2 Z" fill="#000"/></svg>
<svg class="ic" style="left:1137px;top:922px" width="7" height="5" viewBox="0 0 7 5"><path d="M3.5 4.6 L6.8 0.6 H0.2 Z" fill="#000"/></svg>
<div id="thumb"></div>
<div style="left:1137px;top:510px;width:7px;height:8px;background:repeating-linear-gradient(#9f9a93 0,#9f9a93 1px,#ffffff 1px,#ffffff 2px,transparent 2px,transparent 3px)"></div>
<div id="slist"></div><div id="selrow"></div>
<div class="btn" style="left:1159px;top:901px;width:110px;height:30px"></div>
<svg class="ic" style="left:1177px;top:906px" width="18" height="20"><use href="#bin"/></svg>
<svg class="ic" style="left:6px;top:945px" width="24" height="18"><use href="#tabfold"/></svg>

<div id="txt">
<div style="left:9px;top:39px;width:7px;height:1px;background:#111"></div>
<div style="left:56px;top:39px;width:7px;height:1px;background:#111"></div>
<div style="left:138px;top:39px;width:8px;height:1px;background:#111"></div>
<div style="left:199px;top:39px;width:7px;height:1px;background:#111"></div>
<span class="t bi title" style="left:552.6px;top:1.17px;transform:scaleX(1.1203);color:#fff;">Aeskulap Betrachter</span>
<span class="t menu" style="left:7.6px;top:23.67px;transform:scaleX(1.1309);">Datei</span>
<span class="t menu" style="left:54.6px;top:23.67px;transform:scaleX(1.1301);">Bearbeiten</span>
<span class="t menu" style="left:137.6px;top:23.67px;transform:scaleX(1.1172);">Ansicht</span>
<span class="t menu" style="left:197.6px;top:23.67px;transform:scaleX(1.1228);">Hilfe</span>
<span class="t" style="left:53.6px;top:58.67px;transform:scaleX(1.0828);">Suchen</span>
<span class="t" style="left:35.6px;top:96.67px;transform:scaleX(1.1115);">Filter löschen</span>
<span class="t b" style="left:133.6px;top:56.67px;transform:scaleX(1.1632);">Name:</span>
<span class="t b" style="left:133.6px;top:88.67px;transform:scaleX(1.179);">Datum:</span>
<span class="t b" style="left:993.6px;top:56.67px;transform:scaleX(1.21);">Modalität:</span>
<span class="t" style="left:1092.6px;top:55.67px;transform:scaleX(0.9656);">MR</span>
<span class="t" style="left:234.6px;top:88.67px;transform:scaleX(0.9996);">Kein</span>
<span class="t" style="left:149.6px;top:113.67px;transform:scaleX(1.1437);">Erweiterte Abfrageoptionen</span>
<span class="t b" style="left:12.6px;top:131.67px;transform:scaleX(1.1681);">Studien</span>
<span class="t b" style="left:1160.6px;top:131.67px;transform:scaleX(1.1784);">Servergruppen</span>
<span class="t" style="left:1162.6px;top:157.67px;transform:scaleX(0.9739);color:#fff;">HOME</span>
<span class="t" style="left:1162.6px;top:180.67px;transform:scaleX(0.9494);">VPN</span>
<span class="t" style="left:1199.1px;top:905.67px;transform:scaleX(1.0782);">Löschen</span>
<span class="t" style="left:30.6px;top:944.17px;transform:scaleX(1.1297);">Studienverwaltung</span>
<span class="t hdr" style="left:72.6px;top:159.67px;transform:scaleX(1.1207);">Patientenname</span>
<span class="t hdr" style="left:303.6px;top:159.67px;transform:scaleX(1.1366);">Geburtsdatum</span>
<span class="t hdr" style="left:405.6px;top:159.67px;transform:scaleX(1.1115);">Beschreibung</span>
<span class="t hdr" style="left:598.6px;top:159.67px;transform:scaleX(1.1449);">Modalität</span>
<span class="t hdr" style="left:668.6px;top:159.67px;transform:scaleX(1.1519);">Datum/Zeit</span>
<span class="t hdr" style="left:750.6px;top:159.67px;transform:scaleX(1.1331);">Station</span>
<span class="t hdr" style="left:809.6px;top:159.67px;transform:scaleX(1.1038);">Server</span>
</div>
</div>
</body>
</html>
